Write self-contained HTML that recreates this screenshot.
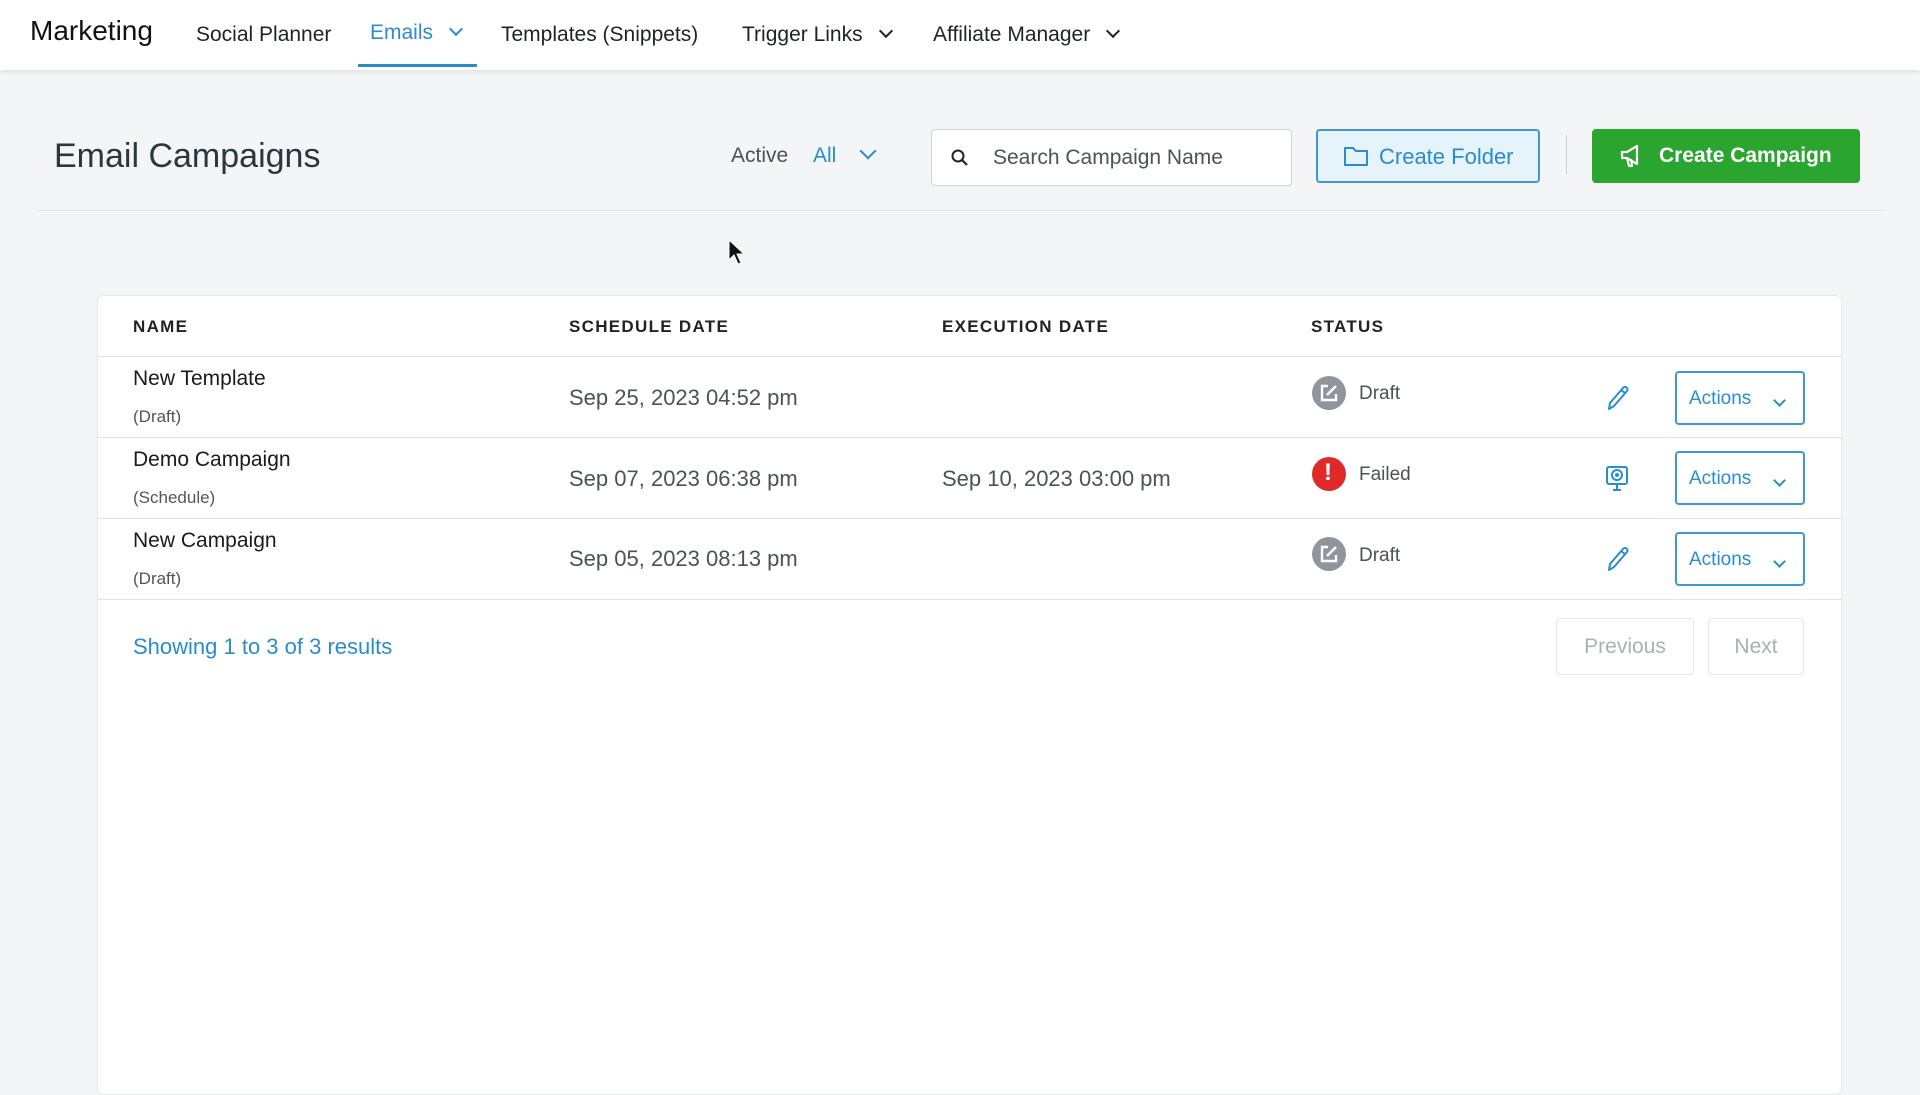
<!DOCTYPE html>
<html><head><meta charset="utf-8"><style>
*{box-sizing:border-box;margin:0;padding:0}
body{width:1920px;height:1080px;overflow:hidden;background:#f4f5f6;font-family:"Liberation Sans",sans-serif;position:relative;color:#1f2328}
.a{position:absolute;white-space:nowrap}
.nav{position:absolute;left:0;top:0;width:1920px;height:70px;background:#fff;box-shadow:0 2px 4px rgba(0,0,0,.08)}
.ni{font-size:21px;color:#1f2328;top:23px}
.chev{display:inline-block;width:10px;height:10px;border-right:2px solid currentColor;border-bottom:2px solid currentColor;transform:rotate(45deg);margin-left:18px;position:relative;top:-5px}
.hd{font-size:17px;letter-spacing:1.3px;color:#222;top:317px;font-weight:600}
.nm{font-size:21px;color:#1b1b1b}
.sub{font-size:17px;color:#555}
.dt{font-size:22px;color:#4b5258}
.st{font-size:19px;color:#4b5258}
.btn{position:absolute;border:2px solid #3d98d3;border-radius:4px;color:#2a8ccc;font-size:19px;background:#fff}
.row{position:absolute;left:97px;width:1745px;height:1px;background:#e2e5e8}
.circ{position:absolute;width:34px;height:34px;border-radius:50%}
</style></head><body>
<div class="nav">
<div class="a" style="left:30px;top:15px;font-size:28px;color:#111">Marketing</div>
<div class="a ni" style="left:196px">Social Planner</div>
<div class="a ni" style="left:370px;color:#2a8ccc;top:21px">Emails<span class="chev"></span></div>
<div style="position:absolute;left:358px;top:64px;width:119px;height:3px;background:#2a8ccc"></div>
<div class="a ni" style="left:501px">Templates (Snippets)</div>
<div class="a ni" style="left:742px">Trigger Links<span class="chev"></span></div>
<div class="a ni" style="left:933px">Affiliate Manager<span class="chev"></span></div>
</div>
<div class="a" style="left:54px;top:137px;font-size:34px;color:#2b3640">Email Campaigns</div>
<div class="a" style="left:731px;top:144px;font-size:21px;color:#4b5258">Active</div>
<div class="a" style="left:813px;top:144px;font-size:21px;color:#2a8ccc">All<span class="chev" style="margin-left:26px;width:12px;height:12px"></span></div>
<div style="position:absolute;left:931px;top:129px;width:361px;height:57px;border:1.5px solid #cfd4d9;border-radius:4px;background:#fff"></div>
<svg class="a" style="left:950px;top:148px" width="20" height="20" viewBox="0 0 20 20"><circle cx="8" cy="8" r="5.5" fill="none" stroke="#222" stroke-width="2"/><path d="M12 12l5 5" stroke="#222" stroke-width="2.2"/></svg>
<div class="a" style="left:993px;top:146px;font-size:21px;color:#4b5258">Search Campaign Name</div>
<div style="position:absolute;left:1316px;top:129px;width:224px;height:54px;border:2px solid #3d98d3;border-radius:4px;background:#e6f3fb"></div>
<svg class="a" style="left:1343px;top:145px" width="26" height="22" viewBox="0 0 26 22"><path d="M2 3h8l3 3h11v14H2z" fill="none" stroke="#2a8ccc" stroke-width="2" stroke-linejoin="round"/></svg>
<div class="a" style="left:1379px;top:144px;font-size:22px;color:#2a8ccc">Create Folder</div>
<div style="position:absolute;left:1566px;top:135px;width:1px;height:39px;background:#ccd"></div>
<div style="position:absolute;left:1592px;top:129px;width:268px;height:54px;border-radius:4px;background:#2aa52f"></div>
<svg class="a" style="left:1619px;top:143px" width="26" height="26" viewBox="0 0 26 26"><path d="M3 9h5l10-6v18L8 15H3z M8 15l2 8h3l-1-7" fill="none" stroke="#fff" stroke-width="2.2" stroke-linejoin="round"/></svg>
<div class="a" style="left:1659px;top:144px;font-size:21px;color:#fff;font-weight:600">Create Campaign</div>
<div style="position:absolute;left:37px;top:210px;width:1850px;height:1px;background:#e3e6e9"></div>
<svg class="a" style="left:728px;top:239px" width="20" height="28" viewBox="0 0 20 28"><path d="M1 1v20l5-5 4 9 3-1-4-9h7z" fill="#111" stroke="#fff" stroke-width="1"/></svg>
<div style="position:absolute;left:97px;top:295px;width:1745px;height:800px;background:#fff;border:1px solid #e6e8ea;border-radius:6px"></div>
<div class="a hd" style="left:133px">NAME</div>
<div class="a hd" style="left:569px">SCHEDULE DATE</div>
<div class="a hd" style="left:942px">EXECUTION DATE</div>
<div class="a hd" style="left:1311px">STATUS</div>
<div class="row" style="top:356px"></div><div class="row" style="top:437px"></div><div class="row" style="top:518px"></div><div class="row" style="top:599px"></div>

<div class="a nm" style="left:133px;top:367px">New Template</div><div class="a sub" style="left:133px;top:407px">(Draft)</div>
<div class="a dt" style="left:569px;top:385px">Sep 25, 2023 04:52 pm</div>
<div class="a nm" style="left:133px;top:448px">Demo Campaign</div><div class="a sub" style="left:133px;top:488px">(Schedule)</div>
<div class="a dt" style="left:569px;top:466px">Sep 07, 2023 06:38 pm</div>
<div class="a dt" style="left:942px;top:466px">Sep 10, 2023 03:00 pm</div>
<div class="a nm" style="left:133px;top:529px">New Campaign</div><div class="a sub" style="left:133px;top:569px">(Draft)</div>
<div class="a dt" style="left:569px;top:546px">Sep 05, 2023 08:13 pm</div>

<div class="circ" style="left:1312px;top:376px;background:#8f959c"></div>
<svg class="a" style="left:1319px;top:383px" width="20" height="20" viewBox="0 0 20 20"><path d="M9 3H3v14h14v-6" fill="none" stroke="#fff" stroke-width="2.4"/><path d="M8 12l9-9" stroke="#fff" stroke-width="2.6"/></svg>
<div class="a st" style="left:1359px;top:383px">Draft</div>
<div class="circ" style="left:1312px;top:457px;background:#e02a2a"></div>
<div class="a" style="left:1324px;top:459px;font-size:24px;font-weight:bold;color:#fff">!</div>
<div class="a st" style="left:1359px;top:464px">Failed</div>
<div class="circ" style="left:1312px;top:537px;background:#8f959c"></div>
<svg class="a" style="left:1319px;top:544px" width="20" height="20" viewBox="0 0 20 20"><path d="M9 3H3v14h14v-6" fill="none" stroke="#fff" stroke-width="2.4"/><path d="M8 12l9-9" stroke="#fff" stroke-width="2.6"/></svg>
<div class="a st" style="left:1359px;top:545px">Draft</div>

<svg class="a" style="left:1604px;top:384px" width="26" height="28" viewBox="0 0 26 28"><path d="M5 25l1-6L19 4a2.5 2.5 0 0 1 4 3L10 22z M17 6l4 3" fill="none" stroke="#2a8ccc" stroke-width="2" stroke-linejoin="round"/></svg>
<svg class="a" style="left:1604px;top:465px" width="26" height="28" viewBox="0 0 26 28"><rect x="3" y="2" width="20" height="17" rx="2" fill="none" stroke="#2a8ccc" stroke-width="2"/><circle cx="13" cy="10" r="5" fill="none" stroke="#2a8ccc" stroke-width="2"/><circle cx="13" cy="10" r="2" fill="#2a8ccc"/><path d="M13 19v5M9 25h8" stroke="#2a8ccc" stroke-width="2"/></svg>
<svg class="a" style="left:1604px;top:545px" width="26" height="28" viewBox="0 0 26 28"><path d="M5 25l1-6L19 4a2.5 2.5 0 0 1 4 3L10 22z M17 6l4 3" fill="none" stroke="#2a8ccc" stroke-width="2" stroke-linejoin="round"/></svg>

<div class="btn" style="left:1675px;top:371px;width:130px;height:54px"><span class="a" style="left:12px;top:15px">Actions</span><span class="chev a" style="left:98px;top:16px;margin:0;width:9px;height:9px"></span></div>
<div class="btn" style="left:1675px;top:451px;width:130px;height:54px"><span class="a" style="left:12px;top:15px">Actions</span><span class="chev a" style="left:98px;top:16px;margin:0;width:9px;height:9px"></span></div>
<div class="btn" style="left:1675px;top:532px;width:130px;height:54px"><span class="a" style="left:12px;top:15px">Actions</span><span class="chev a" style="left:98px;top:16px;margin:0;width:9px;height:9px"></span></div>

<div class="a" style="left:133px;top:634px;font-size:22px;color:#2a8ccc">Showing 1 to 3 of 3 results</div>
<div style="position:absolute;left:1556px;top:618px;width:138px;height:57px;border:1px solid #e3e6e9;border-radius:4px;color:#aab0b5;font-size:21px;text-align:center;line-height:55px">Previous</div>
<div style="position:absolute;left:1708px;top:618px;width:96px;height:57px;border:1px solid #e3e6e9;border-radius:4px;color:#aab0b5;font-size:21px;text-align:center;line-height:55px">Next</div>
</body></html>
